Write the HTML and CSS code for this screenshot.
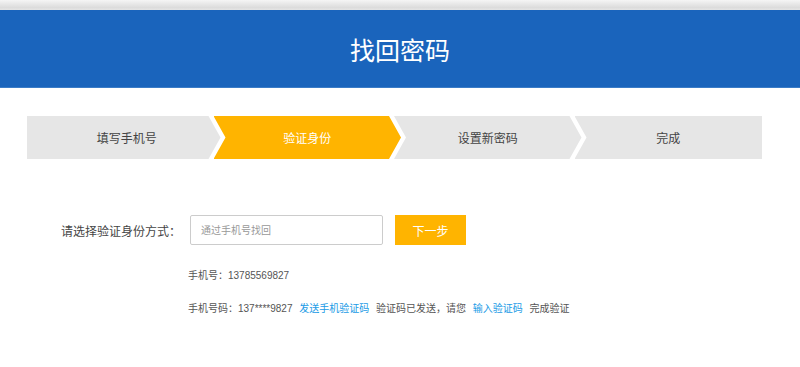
FILE: index.html
```html
<!DOCTYPE html>
<html lang="zh-CN">
<head>
    <meta charset="UTF-8">
    <meta name="viewport" content="width=device-width, initial-scale=1.0">
    <title>找回密码</title>
    <link rel="stylesheet" href="styles.css">
</head>
<body>
<div class="top-bar"></div>

<div class="header">
    <h1>找回密码</h1>
</div>

<!-- Step indicator -->
<div class="steps">
    <div class="step step-first">填写手机号</div>
    <div class="step step-active">验证身份</div>
    <div class="step">设置新密码</div>
    <div class="step step-last">完成</div>
</div>

<!-- Verify form -->
<form class="verify-form" action="#" method="POST">
    <div class="form-row">
        <label for="verify-type">请选择验证身份方式：</label>
        <input type="text" id="verify-type" name="verify-type" placeholder="通过手机号找回">
        <button type="submit">下一步</button>
    </div>

    <p class="info">手机号：13785569827</p>
    <p class="info">
        手机号码：137****9827
        <a href="#" class="link">发送手机验证码</a>
        验证码已发送，请您
        <a href="#" class="link">输入验证码</a>
        完成验证
    </p>
</form>
</body>
</html>
```

FILE: styles.css
```css
body {
    font-family: "Liberation Sans", "Noto Sans CJK SC", sans-serif;
    background-color: #fff;
    margin: 0;
    color: #555;
}

.top-bar {
    height: 10px;
    background: linear-gradient(#f5f5f5, #dcdcdc 75%, #e4e4e4);
}

.header {
    background-color: #1a64bc;
    height: 77px;
    border-bottom: 1px solid #3b7cc7;
    display: flex;
    justify-content: center;
    align-items: center;
}

.header h1 {
    margin: 0;
    color: #fff;
    font-size: 25px;
    font-weight: normal;
}

.steps {
    display: flex;
    margin: 28px 38px 0 27px;
}

.step {
    flex: 1;
    height: 43px;
    margin-left: -7px;
    background-color: #e6e6e6;
    color: #444;
    font-size: 12px;
    display: flex;
    justify-content: center;
    align-items: center;
    clip-path: polygon(0 0, calc(100% - 12px) 0, 100% 50%, calc(100% - 12px) 100%, 0 100%, 12px 50%);
}

.step-first {
    margin-left: 0;
    padding-left: 6px;
    clip-path: polygon(0 0, calc(100% - 12px) 0, 100% 50%, calc(100% - 12px) 100%, 0 100%);
}

.step-last {
    clip-path: polygon(0 0, 100% 0, 100% 100%, 0 100%, 12px 50%);
}

.step-active {
    background-color: #ffb400;
    color: #fff;
}

.verify-form {
    margin: 56px 0 0 27px;
}

.form-row {
    display: flex;
    align-items: center;
}

label {
    width: 154px;
    margin-right: 9px;
    text-align: right;
    font-size: 12px;
    color: #444;
}

input[type="text"] {
    width: 193px;
    height: 30px;
    box-sizing: border-box;
    padding: 0 10px;
    border: 1px solid #ccc;
    border-radius: 2px;
    font-family: inherit;
    font-size: 10px;
}

input::placeholder {
    color: #999;
}

button {
    width: 71px;
    height: 30px;
    margin-left: 12px;
    background-color: #ffb400;
    color: #fff;
    border: none;
    font-family: inherit;
    font-size: 12px;
    cursor: pointer;
}

.info {
    margin: 21px 0 0 161px;
    line-height: 20px;
    font-size: 10px;
    color: #555;
}

.info + .info {
    margin-top: 13px;
}

.link {
    color: #1a9be6;
    text-decoration: none;
    margin: 0 4px;
}
```
